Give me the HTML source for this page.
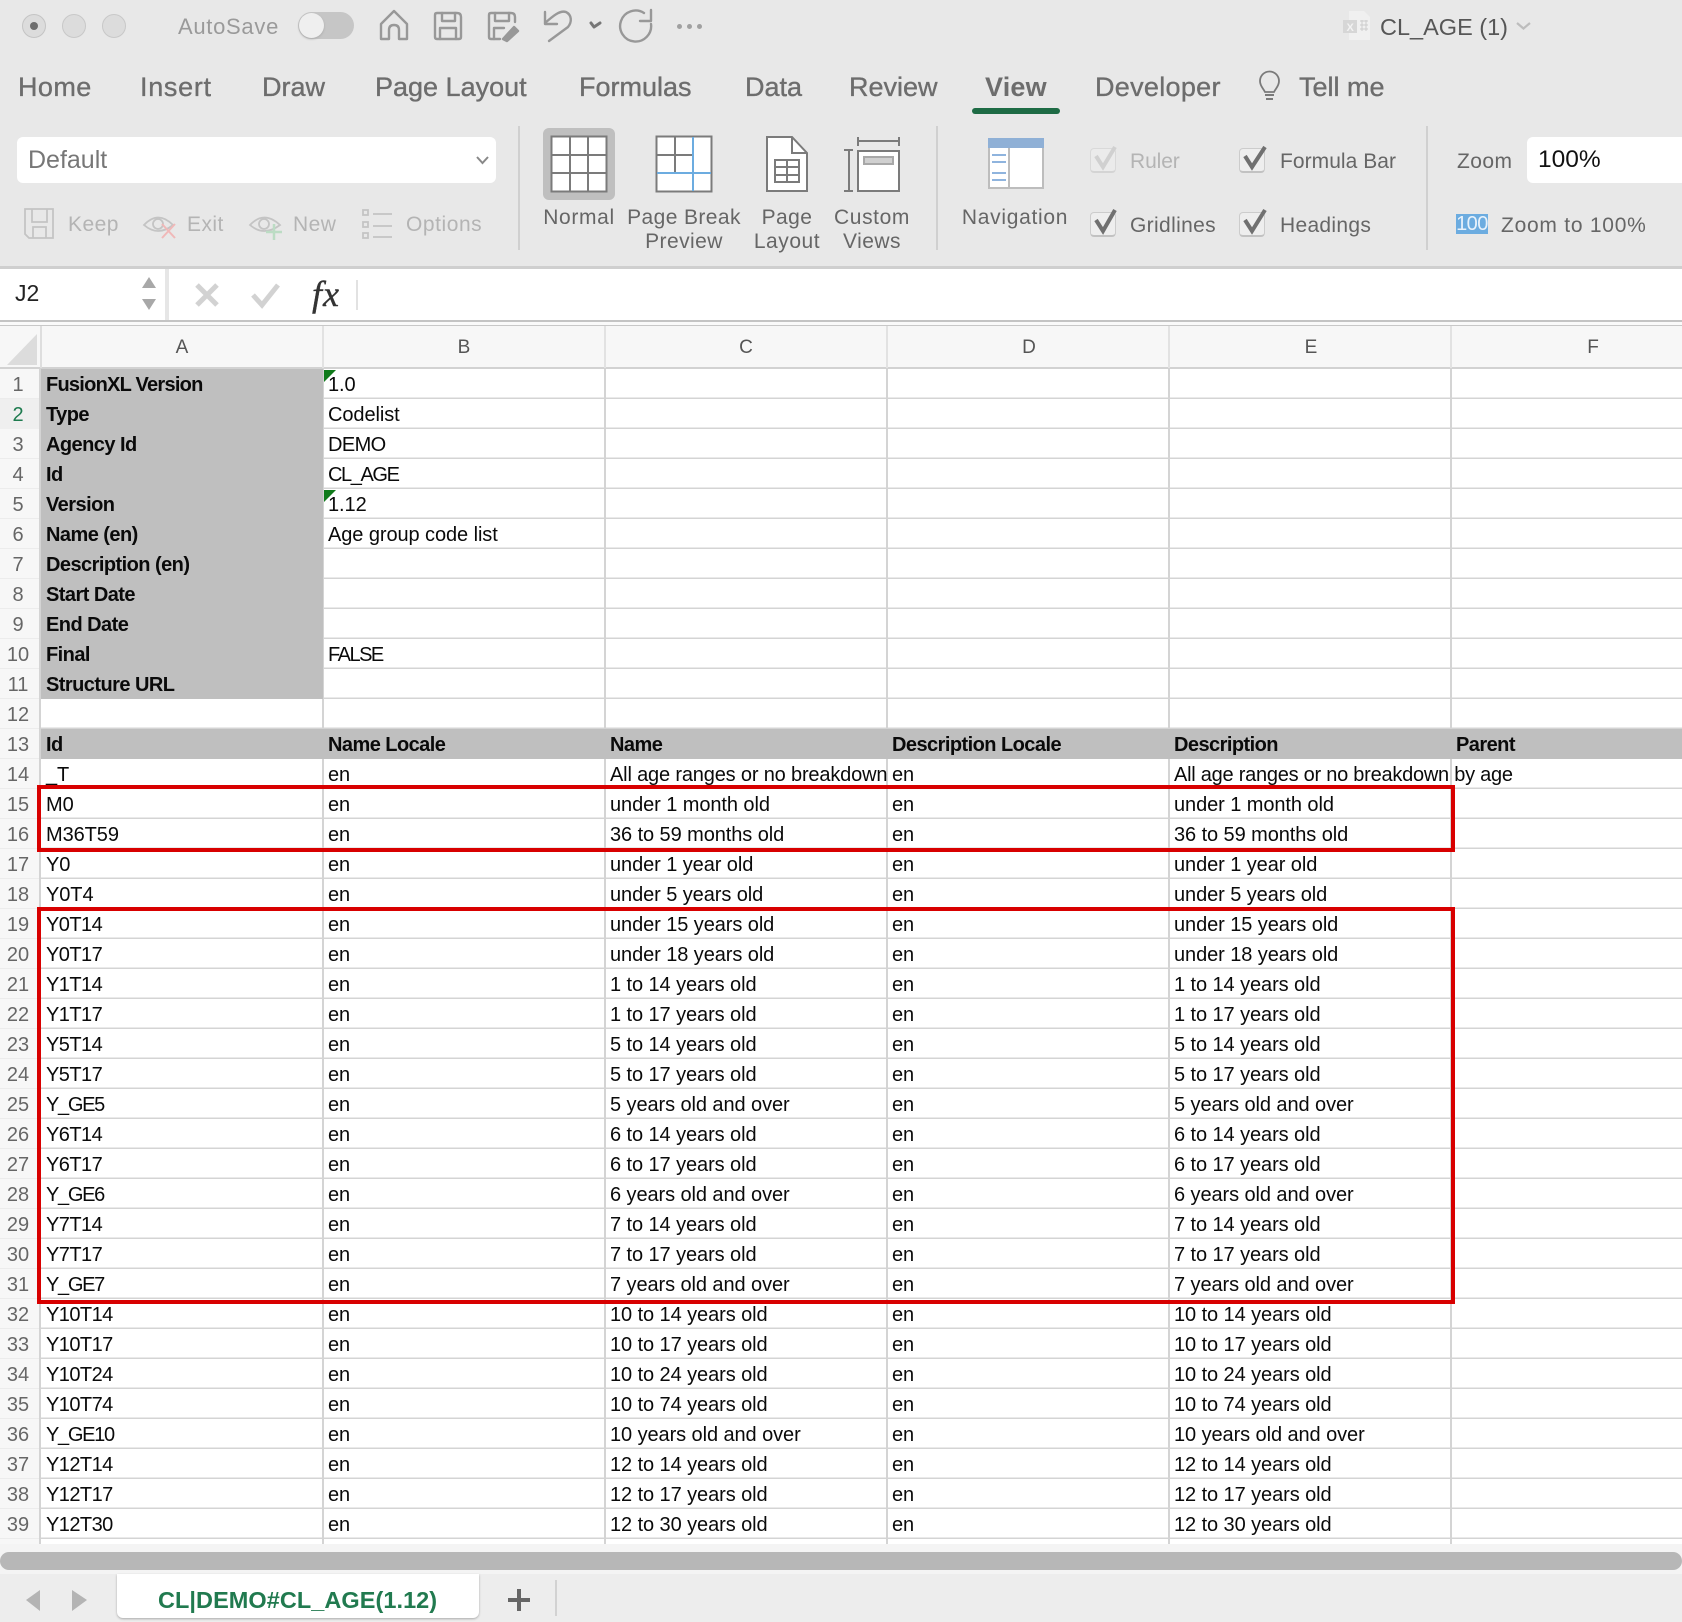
<!DOCTYPE html>
<html><head><meta charset="utf-8"><style>
html,body{margin:0;padding:0}
body{width:1682px;height:1622px;position:relative;overflow:hidden;background:#fff;font-family:"Liberation Sans",sans-serif}
.a{position:absolute;white-space:nowrap}
.tab{position:absolute;top:71px;font-size:27px;line-height:32px;color:#6d6d6d;-webkit-text-stroke:.35px #6d6d6d;white-space:nowrap}
.lb{position:absolute;font-size:21px;line-height:28px;color:#666;white-space:nowrap;letter-spacing:.45px}
.dis{color:#b4b4b4}
.c{text-align:center;transform:translateX(-50%)}
.dv{position:absolute;width:2px;top:126px;height:124px;background:#d0d0d0}
svg{position:absolute;overflow:visible}
.vl{position:absolute;top:369px;height:1175px;width:2px;background:#d4d4d4}
.fill{position:absolute;background:#bfbfbf}
.r{position:absolute;left:46px;height:30px;line-height:33px;font-size:20px;color:#0a0a0a;white-space:nowrap;letter-spacing:-.08px}
.r span{display:inline-block;width:282px;white-space:nowrap;overflow:visible;vertical-align:top}
.r span.n{position:absolute;left:-46px;width:36px;text-align:center;color:#666;letter-spacing:0;font-size:20px}
.r span.u{letter-spacing:-.55px}
.r span.g{letter-spacing:-1.3px}
.b{font-weight:bold;letter-spacing:-.55px}
.b span.n{font-weight:normal}
.b span.v{font-weight:normal;letter-spacing:-.08px}
.box{position:absolute;border:4px solid #d80000;box-sizing:border-box}
.col{position:absolute;top:335px;font-size:19px;line-height:26px;color:#555;transform:translateX(-50%)}
.chk{position:absolute;width:26px;height:25px;background:#eeeeee;border:1px solid #cccccc;border-radius:4px;box-sizing:border-box;border-bottom:2px solid #c2c2c2}
</style></head><body>

<!-- ribbon -->
<div class="a" style="left:0;top:0;width:1682px;height:267px;background:#e8e8e8"></div>
<div class="a" style="left:0;top:266px;width:1682px;height:3px;background:#cfcfcf"></div>

<!-- traffic lights -->
<div class="a" style="left:22px;top:14px;width:24px;height:24px;border-radius:50%;background:#dcdcdc;border:1px solid #c4c4c4;box-sizing:border-box"></div>
<div class="a" style="left:30px;top:22px;width:8px;height:8px;border-radius:50%;background:#6e6e6e"></div>
<div class="a" style="left:62px;top:14px;width:24px;height:24px;border-radius:50%;background:#dcdcdc;border:1px solid #c8c8c8;box-sizing:border-box"></div>
<div class="a" style="left:102px;top:14px;width:24px;height:24px;border-radius:50%;background:#dcdcdc;border:1px solid #c8c8c8;box-sizing:border-box"></div>

<div class="a" style="left:178px;top:14px;font-size:22px;line-height:26px;color:#9a9a9a;letter-spacing:.7px">AutoSave</div>
<div class="a" style="left:298px;top:12px;width:56px;height:27px;border-radius:14px;background:#c6c6c6"></div>
<div class="a" style="left:299px;top:13px;width:25px;height:25px;border-radius:50%;background:#efefef;box-shadow:0 1px 2px #aaa"></div>

<!-- quick access icons -->
<svg style="left:0;top:0" width="760" height="60" fill="none" stroke="#989898" stroke-width="2.4" stroke-linejoin="round" stroke-linecap="round">
<path d="M381 24L394 11L407 24V39H399V30Q399 25 394 25Q389 25 389 30V39H381Z"/>
<path d="M435 15Q435 13 437 13H457Q461 13 461 17V37Q461 39 459 39H437Q435 39 435 37Z"/>
<path d="M442 13V21H455V13M440 39V28H456V39"/>
<path d="M489 15Q489 13 491 13H511Q515 13 515 17V22M489 15V37Q489 39 491 39H500"/>
<path d="M495 13V21H509V13M494 39V28H504"/>
<path d="M503 39L514 27L518 31L507 41Z" fill="#989898"/>
<path d="M545 12V24H557M545 23C553 16 560 10 566 12C572 15 572 22 568 27L549 41"/>
<path d="M591 23L594 27L600 23" stroke="#777" stroke-width="3"/>
<path d="M651 24A15.500 15.500 0 1 1 644 13M651 10V21H640"/>
</svg>
<div class="a" style="left:677px;top:24px;width:5px;height:5px;border-radius:50%;background:#a0a0a0;box-shadow:10px 0 #a0a0a0,20px 0 #a0a0a0"></div>

<!-- title -->
<svg style="left:1343px;top:10px" width="30" height="32">
<path d="M6 1H21L27 7V30H6Z" fill="#f0f0f0"/><rect x="0" y="10" width="14" height="13" fill="#d6d6d6"/>
<text x="3.500" y="21" font-family="Liberation Sans" font-size="11" font-weight="bold" fill="#f2f2f2">X</text>
<path d="M17 11H25M17 15H25M17 19H25M19 10V21M23 10V21" stroke="#ccc" fill="none"/>
</svg>
<div class="a" style="left:1380px;top:13px;font-size:23.500px;line-height:28px;color:#565656">CL_AGE (1)</div>
<svg style="left:1515px;top:21px" width="18" height="10" fill="none" stroke="#bdbdbd" stroke-width="2.200"><path d="M2 2L8.500 7.500L15 2"/></svg>

<!-- tabs -->
<div class="tab" style="left:18px;letter-spacing:.4px">Home</div>
<div class="tab" style="left:140px;letter-spacing:.7px">Insert</div>
<div class="tab" style="left:262px">Draw</div>
<div class="tab" style="left:375px">Page Layout</div>
<div class="tab" style="left:579px">Formulas</div>
<div class="tab" style="left:745px">Data</div>
<div class="tab" style="left:849px">Review</div>
<div class="tab" style="left:985px;font-weight:bold;-webkit-text-stroke:0;letter-spacing:.2px">View</div>
<div class="a" style="left:972px;top:108px;width:88px;height:6px;border-radius:3px;background:#1e6b45"></div>
<div class="tab" style="left:1095px;letter-spacing:.3px">Developer</div>
<svg style="left:1257px;top:71px" width="26" height="34" fill="none" stroke="#7a7a7a" stroke-width="1.800"><path d="M8 21C6 17 3 15 3 10A9.500 9.500 0 0 1 22 10C22 15 19 17 17 21Z"/><path d="M8 24H17M9 28H16" stroke-width="2"/></svg>
<div class="tab" style="left:1299px">Tell me</div>

<!-- default box -->
<div class="a" style="left:17px;top:137px;width:479px;height:46px;background:#fff;border-radius:6px"></div>
<div class="a" style="left:28px;top:146px;font-size:25px;line-height:28px;color:#777">Default</div>
<svg style="left:475px;top:155px" width="16" height="10" fill="none" stroke="#888" stroke-width="2"><path d="M2 2L7.500 8L13 2"/></svg>

<!-- keep row -->
<svg style="left:0;top:195px" width="520" height="60" fill="none" stroke="#c4c4c4" stroke-width="1.800">
<path d="M25 14H53V43H29L25 39Z"/><path d="M32 14V27H47V14M33 43V32H46V43"/>
<path d="M144 30Q158 15 173 30Q158 42 144 30Z"/><circle cx="158" cy="29" r="5"/>
<path d="M162 29L175 43M175 29L162 43" stroke="#f0b8b8" stroke-width="2"/>
<path d="M250 30Q264 15 280 30Q264 42 250 30Z"/><circle cx="264" cy="29" r="5"/>
<path d="M274 29V45M266 37H282" stroke="#bcdcc4" stroke-width="2.500"/>
<path d="M373 19H392M373 31H392M373 42H392"/>
<rect x="363" y="15" width="5" height="5"/><rect x="363" y="27" width="5" height="5"/><rect x="363" y="38" width="5" height="5"/>
</svg>
<div class="lb dis" style="left:68px;top:211px">Keep</div>
<div class="lb dis" style="left:187px;top:211px">Exit</div>
<div class="lb dis" style="left:293px;top:211px">New</div>
<div class="lb dis" style="left:406px;top:211px;letter-spacing:.55px">Options</div>
<div class="dv" style="left:518px"></div>

<!-- view icons -->
<div class="a" style="left:543px;top:128px;width:72px;height:72px;background:#bfbfbf;border-radius:6px"></div>
<svg style="left:0;top:0" width="1100" height="210" fill="#fff" stroke="#7b7b7b" stroke-width="2">
<rect x="551.500" y="136.500" width="55" height="55"/>
<path d="M570 137V191M588 137V191M552 155H606M552 173H606" fill="none"/>
<rect x="656.500" y="136.500" width="55" height="55"/>
<path d="M657 155H692M675 137V173" fill="none"/>
<path d="M693 137V191M657 173H711" fill="none" stroke="#6cace0" stroke-width="2"/>
<path d="M767 137H792L807 153V191H767Z"/><path d="M792 137V153H807" fill="none"/>
<rect x="775" y="160" width="24" height="22"/><path d="M775 167H799M775 175H799M787 160V182" fill="none"/>
<path d="M858 137V146M899 137V146M858 141H899M844 150H853M844 191H853M849 150V191" fill="none"/>
<rect x="858" y="151" width="41" height="40"/>
<rect x="864" y="157" width="29" height="7" fill="#d0d0d0" stroke="#a8a8a8"/>
<rect x="989" y="139" width="54" height="49" stroke="#bdbdbd"/>
<rect x="988" y="138" width="56" height="10" fill="#8fb0d6" stroke="none"/>
<path d="M1009 148V188" fill="none" stroke="#bdbdbd"/>
<path d="M992 155H1006M992 162H1006M992 173H1006M992 180H1006" fill="none" stroke="#8fb4de"/>
</svg>
<div class="lb c" style="left:579px;top:204px;letter-spacing:.65px">Normal</div>
<div class="lb c" style="left:684px;top:204px;letter-spacing:.4px">Page Break</div>
<div class="lb c" style="left:684px;top:228px">Preview</div>
<div class="lb c" style="left:787px;top:204px">Page</div>
<div class="lb c" style="left:787px;top:228px;letter-spacing:.55px">Layout</div>
<div class="lb c" style="left:872px;top:204px;letter-spacing:.6px">Custom</div>
<div class="lb c" style="left:872px;top:228px">Views</div>
<div class="dv" style="left:936px"></div>
<div class="lb c" style="left:1015px;top:204px;letter-spacing:.7px">Navigation</div>

<!-- checkboxes -->
<div class="chk" style="left:1090px;top:148px;opacity:.5"></div>
<div class="chk" style="left:1090px;top:212px"></div>
<div class="chk" style="left:1239px;top:148px"></div>
<div class="chk" style="left:1239px;top:212px"></div>
<svg style="left:0;top:0" width="1300" height="250" fill="none" stroke-width="4">
<path d="M1096 156L1103 167L1115 147" stroke="#d0d0d0"/>
<path d="M1096 220L1103 231L1115 210" stroke="#707070"/>
<path d="M1245 156L1252 167L1265 147" stroke="#707070"/>
<path d="M1245 220L1252 231L1265 210" stroke="#707070"/>
</svg>
<div class="lb dis" style="left:1130px;top:148px;letter-spacing:-.1px">Ruler</div>
<div class="lb" style="left:1280px;top:148px;letter-spacing:.05px">Formula Bar</div>
<div class="lb" style="left:1130px;top:212px;letter-spacing:.35px">Gridlines</div>
<div class="lb" style="left:1280px;top:212px;letter-spacing:.3px">Headings</div>
<div class="dv" style="left:1426px"></div>
<div class="lb" style="left:1457px;top:148px">Zoom</div>
<div class="a" style="left:1527px;top:137px;width:160px;height:46px;background:#fff;border-radius:6px"></div>
<div class="a" style="left:1538px;top:146px;font-size:24.500px;line-height:28px;color:#111">100%</div>
<div class="a" style="left:1456px;top:214px;width:32px;height:20px;background:#6cace0;color:#e8f2fb;font-size:20px;line-height:20px;text-align:center;letter-spacing:-.5px">100</div>
<div class="lb" style="left:1501px;top:212px;letter-spacing:.75px">Zoom to 100%</div>

<!-- formula bar -->
<div class="a" style="left:0;top:269px;width:1682px;height:52px;background:#fff"></div>
<div class="a" style="left:165px;top:269px;width:4px;height:51px;background:#e6e6e6"></div>
<div class="a" style="left:15px;top:279px;font-size:23px;line-height:28px;color:#222">J2</div>
<svg style="left:140px;top:274px" width="20" height="40" fill="#a8a8a8"><path d="M9 3L16 14H2Z"/><path d="M2 25H16L9 36Z"/></svg>
<svg style="left:190px;top:280px" width="100" height="32" fill="none" stroke="#d2d2d2" stroke-width="5"><path d="M7 5L27 25M27 5L7 25"/><path d="M63 15L72 25L88 5"/></svg>
<div class="a" style="left:312px;top:274px;font-family:'Liberation Serif',serif;font-style:italic;font-size:36px;line-height:40px;color:#333;-webkit-text-stroke:.4px #333;letter-spacing:1px">fx</div>
<div class="a" style="left:356px;top:280px;width:2px;height:30px;background:#e2e2e2"></div>
<div class="a" style="left:0;top:320px;width:1682px;height:2px;background:#c4c4c4"></div>
<div class="a" style="left:0;top:322px;width:1682px;height:3px;background:#fafafa"></div>
<div class="a" style="left:0;top:325px;width:1682px;height:1px;background:#c8c8c8"></div>

<!-- col header -->
<div class="a" style="left:0;top:326px;width:1682px;height:43px;background:#f7f7f7"></div>
<div class="a" style="left:0;top:367px;width:1682px;height:2px;background:#d2d2d2"></div>
<div class="a" style="left:40px;top:326px;width:2px;height:42px;background:#dedede"></div>
<svg style="left:7px;top:334px" width="32" height="32"><path d="M30 0V31H0Z" fill="#dcdcdc"/></svg>
<div class="a" style="left:322px;top:326px;width:2px;height:42px;background:#e2e2e2"></div>
<div class="a" style="left:604px;top:326px;width:2px;height:42px;background:#e2e2e2"></div>
<div class="a" style="left:886px;top:326px;width:2px;height:42px;background:#e2e2e2"></div>
<div class="a" style="left:1168px;top:326px;width:2px;height:42px;background:#e2e2e2"></div>
<div class="a" style="left:1450px;top:326px;width:2px;height:42px;background:#e2e2e2"></div>
<div class="col" style="left:182px">A</div>
<div class="col" style="left:464px">B</div>
<div class="col" style="left:746px">C</div>
<div class="col" style="left:1029px">D</div>
<div class="col" style="left:1311px">E</div>
<div class="col" style="left:1593px">F</div>

<!-- row header bg -->
<div class="a" style="left:0;top:369px;width:41px;height:1175px;background:repeating-linear-gradient(#f7f7f7 0,#f7f7f7 29px,#ececec 29px,#ececec 30px)"></div>
<div class="a" style="left:0;top:399px;width:40px;height:30px;background:#efefef"></div>
<div class="a" style="left:39px;top:369px;width:2px;height:1175px;background:#d4d4d4"></div>

<!-- gridlines -->
<div class="a" style="left:41px;top:369px;width:1641px;height:1175px;background:repeating-linear-gradient(#fff 0,#fff 28.500px,#d4d4d4 28.500px,#d4d4d4 30px)"></div>
<div class="vl" style="left:322px"></div><div class="vl" style="left:604px"></div><div class="vl" style="left:886px"></div><div class="vl" style="left:1168px"></div><div class="vl" style="left:1450px"></div>
<div class="fill" style="left:41px;top:369px;width:282px;height:330px"></div>
<div class="fill" style="left:41px;top:729px;width:1641px;height:30px"></div>

<!-- green triangles -->
<svg style="left:324px;top:370px" width="14" height="14"><path d="M0 0H12L0 12Z" fill="#0f7a1a"/></svg>
<svg style="left:324px;top:490px" width="14" height="14"><path d="M0 0H12L0 12Z" fill="#0f7a1a"/></svg>

<!-- rows -->
<div class="r b" style="top:369px"><span class="n">1</span><span style="letter-spacing:-.75px">FusionXL Version</span><span class="v">1.0</span></div>
<div class="r b" style="top:399px"><span class="n" style="color:#1e7b4f">2</span><span>Type</span><span class="v">Codelist</span></div>
<div class="r b" style="top:429px"><span class="n">3</span><span>Agency Id</span><span class="v" style="letter-spacing:-.6px">DEMO</span></div>
<div class="r b" style="top:459px"><span class="n">4</span><span>Id</span><span class="v" style="letter-spacing:-1.4px">CL_AGE</span></div>
<div class="r b" style="top:489px"><span class="n">5</span><span>Version</span><span class="v">1.12</span></div>
<div class="r b" style="top:519px"><span class="n">6</span><span>Name (en)</span><span class="v">Age group code list</span></div>
<div class="r b" style="top:549px"><span class="n">7</span><span>Description (en)</span></div>
<div class="r b" style="top:579px"><span class="n">8</span><span>Start Date</span></div>
<div class="r b" style="top:609px"><span class="n">9</span><span>End Date</span></div>
<div class="r b" style="top:639px"><span class="n">10</span><span>Final</span><span class="v" style="letter-spacing:-1.5px">FALSE</span></div>
<div class="r b" style="top:669px"><span class="n">11</span><span>Structure URL</span></div>
<div class="r" style="top:699px"><span class="n">12</span></div>
<div class="r b" style="top:729px"><span class="n">13</span><span>Id</span><span>Name Locale</span><span>Name</span><span>Description Locale</span><span>Description</span><span>Parent</span></div>
<div class="r" style="top:759px"><span class="n">14</span><span>_T</span><span>en</span><span style="letter-spacing:-.17px">All age ranges or no breakdown</span><span>en</span><span style="letter-spacing:-.25px">All age ranges or no breakdown by age</span></div>
<div class="r" style="top:789px"><span class="n">15</span><span>M0</span><span>en</span><span>under 1 month old</span><span>en</span><span>under 1 month old</span></div>
<div class="r" style="top:819px"><span class="n">16</span><span>M36T59</span><span>en</span><span>36 to 59 months old</span><span>en</span><span>36 to 59 months old</span></div>
<div class="r" style="top:849px"><span class="n">17</span><span>Y0</span><span>en</span><span>under 1 year old</span><span>en</span><span>under 1 year old</span></div>
<div class="r" style="top:879px"><span class="n">18</span><span>Y0T4</span><span>en</span><span>under 5 years old</span><span>en</span><span>under 5 years old</span></div>
<div class="r" style="top:909px"><span class="n">19</span><span class="u">Y0T14</span><span>en</span><span>under 15 years old</span><span>en</span><span>under 15 years old</span></div>
<div class="r" style="top:939px"><span class="n">20</span><span class="u">Y0T17</span><span>en</span><span>under 18 years old</span><span>en</span><span>under 18 years old</span></div>
<div class="r" style="top:969px"><span class="n">21</span><span class="u">Y1T14</span><span>en</span><span>1 to 14 years old</span><span>en</span><span>1 to 14 years old</span></div>
<div class="r" style="top:999px"><span class="n">22</span><span class="u">Y1T17</span><span>en</span><span>1 to 17 years old</span><span>en</span><span>1 to 17 years old</span></div>
<div class="r" style="top:1029px"><span class="n">23</span><span class="u">Y5T14</span><span>en</span><span>5 to 14 years old</span><span>en</span><span>5 to 14 years old</span></div>
<div class="r" style="top:1059px"><span class="n">24</span><span class="u">Y5T17</span><span>en</span><span>5 to 17 years old</span><span>en</span><span>5 to 17 years old</span></div>
<div class="r" style="top:1089px"><span class="n">25</span><span class="g">Y_GE5</span><span>en</span><span>5 years old and over</span><span>en</span><span>5 years old and over</span></div>
<div class="r" style="top:1119px"><span class="n">26</span><span class="u">Y6T14</span><span>en</span><span>6 to 14 years old</span><span>en</span><span>6 to 14 years old</span></div>
<div class="r" style="top:1149px"><span class="n">27</span><span class="u">Y6T17</span><span>en</span><span>6 to 17 years old</span><span>en</span><span>6 to 17 years old</span></div>
<div class="r" style="top:1179px"><span class="n">28</span><span class="g">Y_GE6</span><span>en</span><span>6 years old and over</span><span>en</span><span>6 years old and over</span></div>
<div class="r" style="top:1209px"><span class="n">29</span><span class="u">Y7T14</span><span>en</span><span>7 to 14 years old</span><span>en</span><span>7 to 14 years old</span></div>
<div class="r" style="top:1239px"><span class="n">30</span><span class="u">Y7T17</span><span>en</span><span>7 to 17 years old</span><span>en</span><span>7 to 17 years old</span></div>
<div class="r" style="top:1269px"><span class="n">31</span><span class="g">Y_GE7</span><span>en</span><span>7 years old and over</span><span>en</span><span>7 years old and over</span></div>
<div class="r" style="top:1299px"><span class="n">32</span><span class="u">Y10T14</span><span>en</span><span>10 to 14 years old</span><span>en</span><span>10 to 14 years old</span></div>
<div class="r" style="top:1329px"><span class="n">33</span><span class="u">Y10T17</span><span>en</span><span>10 to 17 years old</span><span>en</span><span>10 to 17 years old</span></div>
<div class="r" style="top:1359px"><span class="n">34</span><span class="u">Y10T24</span><span>en</span><span>10 to 24 years old</span><span>en</span><span>10 to 24 years old</span></div>
<div class="r" style="top:1389px"><span class="n">35</span><span class="u">Y10T74</span><span>en</span><span>10 to 74 years old</span><span>en</span><span>10 to 74 years old</span></div>
<div class="r" style="top:1419px"><span class="n">36</span><span class="g">Y_GE10</span><span>en</span><span>10 years old and over</span><span>en</span><span>10 years old and over</span></div>
<div class="r" style="top:1449px"><span class="n">37</span><span class="u">Y12T14</span><span>en</span><span>12 to 14 years old</span><span>en</span><span>12 to 14 years old</span></div>
<div class="r" style="top:1479px"><span class="n">38</span><span class="u">Y12T17</span><span>en</span><span>12 to 17 years old</span><span>en</span><span>12 to 17 years old</span></div>
<div class="r" style="top:1509px"><span class="n">39</span><span class="u">Y12T30</span><span>en</span><span>12 to 30 years old</span><span>en</span><span>12 to 30 years old</span></div>

<!-- red boxes -->
<div class="box" style="left:37px;top:785px;width:1418px;height:67px"></div>
<div class="box" style="left:37px;top:907px;width:1418px;height:397px"></div>

<!-- bottom -->
<div class="a" style="left:0;top:1544px;width:1682px;height:30px;background:#f4f4f4"></div>
<div class="a" style="left:0;top:1552px;width:1682px;height:18px;border-radius:9px;background:#b7b7b7"></div>
<div class="a" style="left:0;top:1574px;width:1682px;height:48px;background:#ededed"></div>
<div class="a" style="left:117px;top:1574px;width:362px;height:44px;background:#fff;border-radius:0 0 6px 6px;box-shadow:0 1px 2px #aaa"></div>
<div class="a" style="left:158px;top:1585px;font-size:23.500px;line-height:30px;font-weight:bold;color:#217a4f;letter-spacing:.05px">CL|DEMO#CL_AGE(1.12)</div>
<svg style="left:24px;top:1588px" width="540" height="30" fill="#b4b4b4"><path d="M16 2L2 12L16 23Z"/><path d="M48 2L63 12L48 23Z"/><path d="M484 10H506V14H484Z M493 1H497V23H493Z" fill="#666"/></svg>
<div class="a" style="left:555px;top:1580px;width:2px;height:36px;background:#d2d2d2"></div>
</body></html>
